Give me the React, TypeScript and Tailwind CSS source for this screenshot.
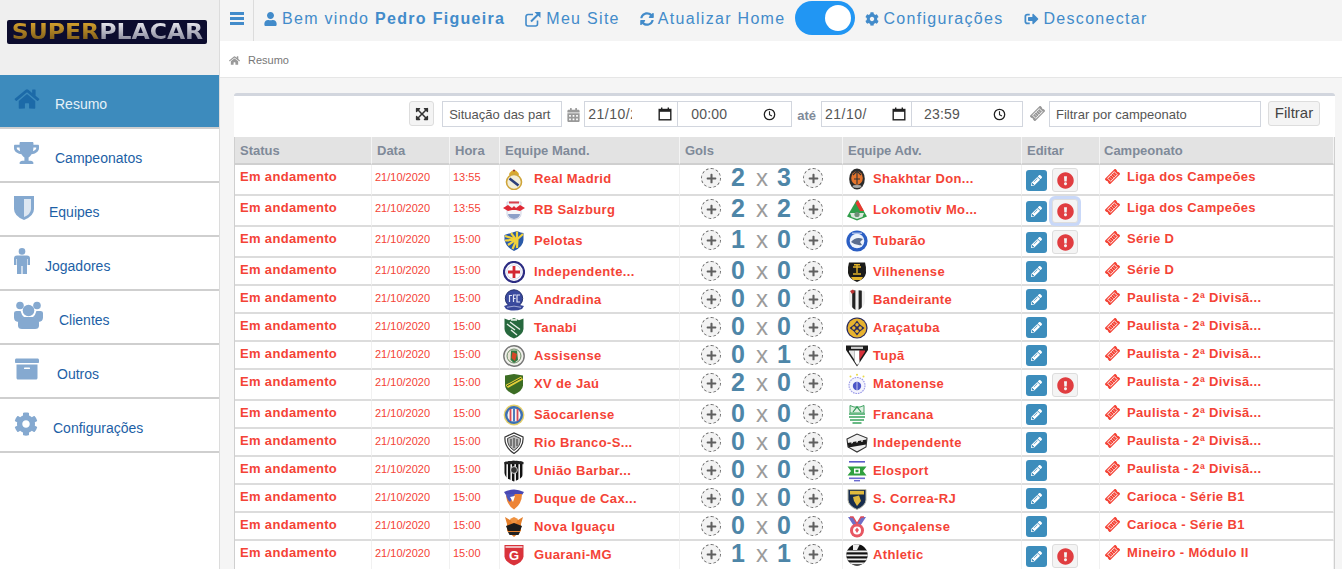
import React from "react";
import {
  FaHome, FaTrophy, FaArchive, FaCog, FaSyncAlt, FaUser, FaSignOutAlt,
  FaPencilAlt, FaExclamationCircle, FaPlus, FaCalendarAlt, FaExpandArrowsAlt,
} from "react-icons/fa";

const SH = "M3 2.5Q11 0 19 2.5V12Q19 18 11 21.5Q3 18 3 12Z";

function Stripes({ id, a, b, n = 7 }: { id: string; a: string; b: string; n?: number }) {
  const w = 16 / n;
  return (
    <>
      <clipPath id={id}><path d={SH} /></clipPath>
      <g clipPath={`url(#${id})`}>
        <rect x="3" y="0" width="16" height="22" fill={a} />
        {Array.from({ length: Math.floor(n / 2) + 1 }).map((_, i) => (
          <rect key={i} x={3 + w * (2 * i + 1)} y="0" width={w} height="22" fill={b} />
        ))}
      </g>
    </>
  );
}

const crests: Record<string, React.ReactNode> = {
  realmadrid: (<>
    <path d="M6 6Q11 -2 16 6L15.5 7.5H6.5Z" fill="#d9a92f" />
    <circle cx="11" cy="14" r="7.5" fill="#f3eed8" stroke="#cfa53a" strokeWidth="1.6" />
    <path d="M6.5 10.5L15.5 17.5" stroke="#2c3f7a" strokeWidth="2.6" />
    <circle cx="11" cy="2.5" r="1" fill="#9a2f30" />
  </>),
  salzburg: (<>
    <path d="M4 3H18V15Q18 20 11 20.5Q4 20 4 15Z" fill="#f6f6f8" stroke="#c8cbe0" strokeWidth=".8" />
    <path d="M0 9L5 6L9 9L11 7L13 9L17 6L22 9L17 12L13 11H9L5 12Z" fill="#df2935" />
    <path d="M5 15H17Q17 19 11 20Q5 19 5 15Z" fill="#8da0c8" />
    <rect x="6" y="2.5" width="10" height="2" fill="#d8404c" />
  </>),
  pelotas: (<>
    <path d="M1.5 5Q8 3 14 1Q18 3 20.5 3V10Q20 17 11 21Q3 17 1.5 10Z" fill="#2a5aa8" />
    <path d="M2 6L13 9.5L5 15M14 1.6L14 9L9.5 19M20 4L14.5 9L14 18M8 3L13 9.5L2 10.5" stroke="#f1d23c" strokeWidth="2.2" fill="none" />
  </>),
  independente: (<>
    <circle cx="11" cy="11" r="10" fill="#fff" stroke="#2c2c83" strokeWidth="2.2" />
    <circle cx="11" cy="11" r="7.2" fill="none" stroke="#c9c9e6" strokeWidth=".8" />
    <path d="M9.6 5H12.4V9.6H17V12.4H12.4V17H9.6V12.4H5V9.6H9.6Z" fill="#d32833" />
  </>),
  andradina: (<>
    <circle cx="11" cy="9.5" r="8.7" fill="#3a4a9e" stroke="#28336f" strokeWidth="1" />
    <path d="M6.5 13V6.5H9M13 6H10.5V13M10.5 9.5H12.6M17 6H14V13H17" stroke="#dfe3f5" strokeWidth="1.2" fill="none" />
    <path d="M1 17Q11 13.5 21 17L19 20Q11 23 3 20Z" fill="#39479a" />
    <path d="M4 18.3Q11 16 18 18.3" stroke="#cfd4ef" strokeWidth=".7" fill="none" />
  </>),
  tanabi: (<>
    <path d="M1.5 1.5L6 3.2L11 1L16 3.2L20.5 1.5V12Q20 18 11 21.5Q2 18 1.5 12Z" fill="#27693e" />
    <path d="M4 7L12 13M7 5L17 12.5M8 13L14 18" stroke="#e6efe8" strokeWidth="1.4" />
    <rect x="8" y="2" width="6" height="1.8" fill="#d7e6da" />
  </>),
  assisense: (<>
    <circle cx="11" cy="11" r="10.2" fill="#f1f1ec" stroke="#777" strokeWidth="1.4" />
    <circle cx="11" cy="11" r="7" fill="#e9e6d7" stroke="#6c8a68" strokeWidth="1" />
    <path d="M8 5.5H14L15 15L11 18L7.5 15Z" fill="#317a43" />
    <path d="M9.5 7L14 9L12 16L8.5 13Z" fill="#d74626" />
  </>),
  xvjau: (<>
    <path d="M2 2.5L11 1L20 2.5V12.5Q19.5 18 11 21.5Q2.5 18 2 12.5Z" fill="#3c6d24" />
    <path d="M2.5 12L18 3.5L20 6.5L5 15Z" fill="#e4cf38" />
    <path d="M4 12.8L18.4 5" stroke="#2f5420" strokeWidth="1" />
  </>),
  saocarlense: (<>
    <circle cx="11" cy="11" r="10.4" fill="#e4cf6a" />
    <circle cx="11" cy="11" r="9" fill="#3b6fb5" />
    <circle cx="11" cy="11" r="6.6" fill="#f4f4f4" />
    <rect x="6.6" y="5" width="1.8" height="12" fill="#d84a55" />
    <rect x="10.1" y="4.4" width="1.8" height="13" fill="#3b6fb5" />
    <rect x="13.6" y="5" width="1.8" height="12" fill="#d84a55" />
  </>),
  riobranco: (<>
    <path d="M2 5L11 1L20 5Q21 15 11 21.5Q1 15 2 5Z" fill="#fff" stroke="#333" strokeWidth="1.2" />
    <path d="M4.5 6.5L11 3.5L17.5 6.5Q18 14 11 18.5Q4 14 4.5 6.5Z" fill="#bbb" stroke="#333" strokeWidth=".9" />
    <path d="M8 7V14M11 6V16M14 7V14" stroke="#333" strokeWidth="1" />
  </>),
  uniao: (<>
    <clipPath id="c-uniao"><path d="M1.5 2Q11 -.5 20.5 2V13Q20 18.5 11 21.5Q2 18.5 1.5 13Z" /></clipPath>
    <g clipPath="url(#c-uniao)">
      <rect width="22" height="22" fill="#eee" />
      {[1, 5, 9, 13, 17].map((x) => <rect key={x} x={x} width="2.4" height="22" fill="#111" />)}
      <rect y="0" width="22" height="4.2" fill="#222" />
      <circle cx="11" cy="10" r="3.4" fill="#333" stroke="#eee" strokeWidth=".8" />
    </g>
  </>),
  duque: (<>
    <path d="M1 4Q11 -1 21 4L19 7H3Z" fill="#4848b4" />
    <path d="M3 6H19Q19 16 11 21.5Q3 16 3 6Z" fill="#ed8436" />
    <path d="M3 6H12L7 14Q3.5 11 3 6Z" fill="#4a55bd" />
    <path d="M7 9L12 8L10 14Z" fill="#fff" />
  </>),
  novaiguacu: (<>
    <path d="M2 1L7 4H15L20 1L18 8V15L11 21L4 15V8Z" fill="#e47f2b" />
    <path d="M3 10L11 7L19 10L17 15H5Z" fill="#1c1c1c" />
    <path d="M5 16H17L15.5 19H6.5Z" fill="#222" />
    <path d="M7 3L11 1L15 3L13 7H9Z" fill="#ef9240" />
  </>),
  guarani: (<>
    <path d="M1.5 1H20.5V12.5Q20 18 11 21.5Q2 18 1.5 12.5Z" fill="#d9333b" />
    <rect x="2.5" y="2" width="17" height="2" fill="#eeb7ba" />
    <text x="11" y="16" textAnchor="middle" fontFamily="Liberation Sans" fontWeight="700" fontSize="13" fill="#fff">G</text>
  </>),
  shakhtar: (<>
    <ellipse cx="11" cy="11" rx="7.8" ry="10.6" fill="#2b2b2b" />
    <ellipse cx="11" cy="10" rx="5.8" ry="6.8" fill="#e5742c" />
    <path d="M7 7L11 3L15 7M8 11H14M11 4V16" stroke="#333" strokeWidth="1.1" fill="none" />
    <ellipse cx="11" cy="18.5" rx="4.4" ry="1.4" fill="#aaa" />
  </>),
  lokomotiv: (<>
    <path d="M11 .5L21 17.5L11 21.5L1 17.5Z" fill="#2f9e4a" />
    <path d="M12 1L18 12H14L9.5 4Z" fill="#e63a2f" />
    <path d="M4 14H18L16.5 18L11 20L5.5 18Z" fill="#d8e8dc" />
    <circle cx="11" cy="15.5" r="2.6" fill="#6f8f78" />
  </>),
  tubarao: (<>
    <circle cx="11" cy="11" r="10.6" fill="#2c5fc4" />
    <circle cx="11" cy="11" r="7.3" fill="#eef3fb" />
    <path d="M5 12Q10 6 17 9L14 12L16 15Q10 16 5 12Z" fill="#5b6d8f" />
    <path d="M6 3.2H16" stroke="#dfe7f8" strokeWidth="1" />
  </>),
  vilhenense: (<>
    <path d="M3 1.5H19Q20.5 6 20 12Q19 18 11 21Q3 18 2 12Q1.5 6 3 1.5Z" fill="#1c1c1a" />
    <path d="M7 6H15M8 3.8H14M11 4V12M7 13H15" stroke="#e2b32a" strokeWidth="1.4" />
    <path d="M5 16H17L15 19H7Z" fill="#e2b32a" />
  </>),
  bandeirante: (<>
    <Stripes id="c-band" a="#efefef" b="#222" n={5} />
    <path d="M4 2L7 .6L9 3L6 5Z" fill="#b33" />
  </>),
  aracatuba: (<>
    <circle cx="11" cy="11" r="10.6" fill="#27295f" />
    <circle cx="11" cy="11" r="9.4" fill="#e8b32f" />
    <path d="M11 3.5L14 7.5L18.5 11L14 14.5L11 18.5L8 14.5L3.5 11L8 7.5Z" fill="#27295f" />
    <circle cx="11" cy="7.8" r="1.7" fill="#e8b32f" />
    <circle cx="11" cy="14.2" r="1.7" fill="#e8b32f" />
    <circle cx="7.8" cy="11" r="1.7" fill="#e8b32f" />
    <circle cx="14.2" cy="11" r="1.7" fill="#e8b32f" />
  </>),
  tupa: (<>
    <path d="M0 .5H22V5L11 21.5L0 5Z" fill="#1a1a1a" />
    <path d="M3 5.5H8.5V15L3 6.8Z" fill="#e6e6e6" />
    <path d="M8.5 5.5H13.5V18L11 20L8.5 16Z" fill="#fff" />
    <path d="M13.5 5.5H19V6.8L13.5 15Z" fill="#d7303a" />
    <rect x="5" y="1.7" width="12" height="2.2" fill="#cfcfcf" />
  </>),
  matonense: (<>
    <circle cx="11" cy="12.5" r="8" fill="#f4f4fd" stroke="#9a9ae8" strokeWidth="1.1" strokeDasharray="1.6 .9" />
    <circle cx="11" cy="13" r="4.2" fill="#4c55c7" />
    <path d="M11 9V17" stroke="#dfe1fa" strokeWidth=".8" />
    <circle cx="11" cy="1.8" r="1" fill="#e9d94a" />
    <circle cx="4.5" cy="3.5" r="1" fill="#e9d94a" />
    <circle cx="17.5" cy="3.5" r="1" fill="#e9d94a" />
  </>),
  francana: (<>
    <path d="M4 1.5L8 3H14L18 1.5V9H4Z" fill="#dff0e2" stroke="#2f9a55" strokeWidth=".9" />
    <path d="M7 8L11 2.8L15 8" stroke="#2f9a55" strokeWidth="1.2" fill="none" />
    <path d="M3 9H19V13Q18 19 11 21.5Q4 19 3 13Z" fill="#fff" />
    <path d="M3 10H19M3 13H19M4 16H18M6.5 19H15.5" stroke="#39a45e" strokeWidth="1.6" />
  </>),
  independente2: (<>
    <path d="M1 7L11 2L21 6L20 15L11 20L2 15Z" fill="#efefef" stroke="#333" strokeWidth="1.1" />
    <path d="M1.5 11L20.5 7.5L20 12.5L2.5 15.5Z" fill="#1a1a1a" />
    <path d="M5 11L7 10.5M10 10L12 9.7M15 9.2L17 8.9" stroke="#eee" strokeWidth="1.2" />
  </>),
  elosport: (<>
    <rect x="3" y="1" width="16" height="1.6" fill="#5a5ac8" />
    <path d="M1.5 6.5H20.5L17 11L20.5 15.5H1.5L5 11Z" fill="#2fa03f" />
    <rect x="8" y="8.5" width="6" height="5" fill="#fff" />
    <rect x="9.5" y="9.8" width="3" height="2.4" fill="#2fa03f" />
    <rect x="3" y="17.5" width="16" height="1.6" fill="#6a6ad0" />
    <rect x="8" y="20" width="6" height="1.4" fill="#6a6ad0" />
  </>),
  scorrea: (<>
    <path d="M2 1.5H20V12Q19.5 18 11 21.5Q2.5 18 2 12Z" fill="#172c4d" stroke="#b8b8a8" strokeWidth="1" />
    <path d="M4 2.8H18V6.5H4Z" fill="#e1b93d" />
    <path d="M7 9L13 7.5L15 13L11 18L8 13Z" fill="#e1b93d" />
  </>),
  goncalense: (<>
    <path d="M2 1L7 1L11 8L15 1L20 1L13.5 11H8.5Z" fill="#6e6ec6" />
    <path d="M4 1L7 1L11 7.5L15 1L18 1" stroke="#e04a55" strokeWidth="1.3" fill="none" />
    <circle cx="11" cy="14.5" r="7" fill="#e75762" />
    <circle cx="11" cy="14.5" r="4" fill="#fff" />
    <path d="M11 11.5L13 14L11 17L9 14Z" fill="#e75762" />
  </>),
  athletic: (<>
    <clipPath id="c-ath"><circle cx="11" cy="11" r="10.7" /></clipPath>
    <g clipPath="url(#c-ath)">
      <rect width="22" height="22" fill="#111" />
      {[6.5, 10.5, 14.5, 18.5].map((y) => <rect key={y} y={y} width="22" height="1.8" fill="#eee" />)}
      <path d="M7 0H14L11 6H7Z" fill="#eee" />
    </g>
  </>),
};

function Crest({ name }: { name: string }) {
  return <svg viewBox="0 0 22 22" width="22" height="22" className="shrink-0">{crests[name]}</svg>;
}

type Row = {
  t: string; a: string; ac: string; sa: number; sb: number; b: string; bc: string; c: string; alert?: boolean; focus?: boolean;
};
const PA = "Paulista - 2ª Divisã...";
const rows: Row[] = [
  { t: "13:55", a: "Real Madrid", ac: "realmadrid", sa: 2, sb: 3, b: "Shakhtar Don...", bc: "shakhtar", c: "Liga dos Campeões", alert: true },
  { t: "13:55", a: "RB Salzburg", ac: "salzburg", sa: 2, sb: 2, b: "Lokomotiv Mo...", bc: "lokomotiv", c: "Liga dos Campeões", alert: true, focus: true },
  { t: "15:00", a: "Pelotas", ac: "pelotas", sa: 1, sb: 0, b: "Tubarão", bc: "tubarao", c: "Série D", alert: true },
  { t: "15:00", a: "Independente...", ac: "independente", sa: 0, sb: 0, b: "Vilhenense", bc: "vilhenense", c: "Série D" },
  { t: "15:00", a: "Andradina", ac: "andradina", sa: 0, sb: 0, b: "Bandeirante", bc: "bandeirante", c: PA },
  { t: "15:00", a: "Tanabi", ac: "tanabi", sa: 0, sb: 0, b: "Araçatuba", bc: "aracatuba", c: PA },
  { t: "15:00", a: "Assisense", ac: "assisense", sa: 0, sb: 1, b: "Tupã", bc: "tupa", c: PA },
  { t: "15:00", a: "XV de Jaú", ac: "xvjau", sa: 2, sb: 0, b: "Matonense", bc: "matonense", c: PA, alert: true },
  { t: "15:00", a: "Sãocarlense", ac: "saocarlense", sa: 0, sb: 0, b: "Francana", bc: "francana", c: PA },
  { t: "15:00", a: "Rio Branco-S...", ac: "riobranco", sa: 0, sb: 0, b: "Independente", bc: "independente2", c: PA },
  { t: "15:00", a: "União Barbar...", ac: "uniao", sa: 0, sb: 0, b: "Elosport", bc: "elosport", c: PA },
  { t: "15:00", a: "Duque de Cax...", ac: "duque", sa: 0, sb: 0, b: "S. Correa-RJ", bc: "scorrea", c: "Carioca - Série B1" },
  { t: "15:00", a: "Nova Iguaçu", ac: "novaiguacu", sa: 0, sb: 0, b: "Gonçalense", bc: "goncalense", c: "Carioca - Série B1" },
  { t: "15:00", a: "Guarani-MG", ac: "guarani", sa: 1, sb: 1, b: "Athletic", bc: "athletic", c: "Mineiro - Módulo II", alert: true },
];

function PlusBtn() {
  return (
    <div className="w-5 h-5 mt-[3px] shrink-0 rounded-full border border-dashed border-[#666] bg-[#f3f3f3] flex items-center justify-center">
      <FaPlus className="text-[#5f5f5f] w-[11px] h-[11px]" />
    </div>
  );
}

function Ticket({ color }: { color: string }) {
  return (
    <svg viewBox="0 0 16 16" width="15" height="15" className="shrink-0">
      <g transform="rotate(-45 8 8)" fill={color}>
        <path d="M0 4H16V6.4Q14.6 8 16 9.6V12H0V9.6Q1.4 8 0 6.4Z" />
        <rect x="3" y="5.6" width="10" height="4.8" fill="none" stroke="#fff" strokeWidth=".9" />
        <path d="M5.5 5.6V10.4M8 5.6V10.4M10.5 5.6V10.4" stroke="#fff" strokeWidth=".5" />
      </g>
    </svg>
  );
}

const thC = "h-[28px] text-left pl-[5px] last:pl-[4px] pt-[1px] text-[13px] font-bold text-[#7f8a99] bg-[#e3e3e3] border-b-2 border-b-[#cfcfcf] border-r border-r-[#f4f4f4] align-middle";
const tdC = "align-top border-b-2 border-b-[#dcdcdc] border-r border-r-[#f1f1f1] p-0";
const red = "text-[#f44336]";

function TableRow({ r }: { r: Row }) {
  const h = r.alert ? "h-[31px]" : "h-[28px]";
  return (
    <tr className={h}>
      <td className={tdC}><div className={`pl-[5px] pt-[3px] leading-[18px] text-[13px] font-bold tracking-[0.33px] ${red}`}>Em andamento</div></td>
      <td className={tdC}><div className={`pl-[3px] pt-[4px] leading-[16px] text-[11px] ${red}`}>21/10/2020</div></td>
      <td className={tdC}><div className={`pl-[3px] pt-[4px] leading-[16px] text-[11px] ${red}`}>{r.t}</div></td>
      <td className={tdC}>
        <div className="flex items-start pl-[3px] pt-[3px]">
          <Crest name={r.ac} />
          <span className={`ml-[9px] mt-[2px] leading-[18px] text-[13px] font-bold tracking-[0.36px] whitespace-nowrap ${red}`}>{r.a}</span>
        </div>
      </td>
      <td className={tdC}>
        <div className="flex items-start pl-[21px] h-[26px]">
          <PlusBtn />
          <div className="flex items-baseline ml-[10px] h-[25px] -mt-[1px]">
            <span className="w-[14px] text-[25px] leading-[26px] font-bold text-[#4e86a8]">{r.sa}</span>
            <span className="w-[12px] ml-[11px] text-[24px] leading-[24px] text-[#9b9b9b]">x</span>
            <span className="w-[14px] ml-[9px] text-[25px] leading-[26px] font-bold text-[#4e86a8]">{r.sb}</span>
          </div>
          <div className="ml-[12px]"><PlusBtn /></div>
        </div>
      </td>
      <td className={tdC}>
        <div className="flex items-start pl-[3px] pt-[3px]">
          <Crest name={r.bc} />
          <span className={`ml-[5px] mt-[2px] leading-[18px] text-[13px] font-bold tracking-[0.36px] whitespace-nowrap ${red}`}>{r.b}</span>
        </div>
      </td>
      <td className={tdC}>
        <div className="flex items-start pl-[4px]">
          <div className={`w-[21px] h-[21px] rounded-[3px] bg-[#3c8dbc] flex items-center justify-center ${r.alert ? "mt-[5px]" : "mt-[3px]"}`}>
            <FaPencilAlt className="text-white w-[11px] h-[11px]" />
          </div>
          {r.alert && (
            <div className={`w-[26px] h-[24px] ml-[5px] mt-[3px] rounded-[3px] bg-[#f4f4f4] border border-[#ddd] flex items-center justify-center ${r.focus ? "ring-[3px] ring-[#c9d8f8]" : ""}`}>
              <FaExclamationCircle className="text-[#e03d40] w-[17px] h-[17px]" />
            </div>
          )}
        </div>
      </td>
      <td className={tdC}>
        <div className="flex items-start pl-[5px] pt-[3px]">
          <span className="mt-[1px]"><Ticket color="#f44336" /></span>
          <span className={`ml-[7px] leading-[18px] text-[13px] font-bold tracking-[0.36px] whitespace-nowrap ${red}`}>{r.c}</span>
        </div>
      </td>
    </tr>
  );
}

const ShieldIcon = () => (
  <svg viewBox="0 0 20 24" width="20" height="24">
    <path d="M0 0H20V13Q20 20 10 24Q0 20 0 13Z" fill="#85a9d0" />
    <path d="M10 3H17V13Q17 18 10 21Z" fill="#fff" opacity=".72" />
  </svg>
);
const ManIcon = () => (
  <svg viewBox="0 0 16 26" width="16" height="26" fill="#85a9d0">
    <circle cx="8" cy="3.4" r="3.3" />
    <path d="M3 7.5H13Q16 7.5 16 10.5V17H13.6V11H13V26H8.6V18H7.4V26H3V11H2.4V17H0V10.5Q0 7.5 3 7.5Z" />
  </svg>
);
const GroupIcon = () => (
  <svg viewBox="0 0 29 28" width="29" height="28" fill="#85a9d0">
    <circle cx="6" cy="4.5" r="3.8" />
    <circle cx="23" cy="4.5" r="3.8" />
    <circle cx="14.5" cy="9.5" r="5.8" />
    <path d="M2.5 10H6.6Q7.5 14 10 16Q5.5 17 4.5 21Q0 20.5 0 16.5V12Q0 10 2.5 10Z" />
    <path d="M26.5 10H22.4Q21.5 14 19 16Q23.5 17 24.5 21Q29 20.5 29 16.5V12Q29 10 26.5 10Z" />
    <path d="M9 16H20Q25 16.5 25 21.5V24.5Q25 28 21 28H8Q4 28 4 24.5V21.5Q4 16.5 9 16Z" />
  </svg>
);

const side = [
  { n: "Resumo", i: <FaHome className="w-[26px] h-[22px]" />, top: "pt-[13px]", tx: "pl-[55px]", active: true },
  { n: "Campeonatos", i: <FaTrophy className="w-[25px] h-[24px]" />, top: "pt-[12px]", tx: "pl-[55px]" },
  { n: "Equipes", i: <ShieldIcon />, top: "pt-[13px]", tx: "pl-[49px]" },
  { n: "Jogadores", i: <ManIcon />, top: "pt-[11px]", tx: "pl-[45px]" },
  { n: "Clientes", i: <GroupIcon />, top: "pt-[10px]", tx: "pl-[59px]" },
  { n: "Outros", i: <FaArchive className="w-[26px] h-[24px]" />, top: "pt-[12px]", tx: "pl-[57px]" },
  { n: "Configurações", i: <FaCog className="w-[24px] h-[24px]" />, top: "pt-[13px]", tx: "pl-[53px]" },
];

const ExtLink = () => (
  <svg viewBox="0 0 16 16" width="16" height="16" fill="none" stroke="#428bca">
    <path d="M12.5 9.5V13a2 2 0 0 1-2 2H3a2 2 0 0 1-2-2V5.5a2 2 0 0 1 2-2h5" strokeWidth="1.6" />
    <path d="M6 10.5L14 2.5" strokeWidth="2" />
    <path d="M9.5 1H15.5V7Z" fill="#428bca" stroke="none" />
  </svg>
);

function Nav({ icon, children, cls, gap }: { icon: React.ReactNode; children: React.ReactNode; cls: string; gap: string }) {
  return (
    <div className={`flex items-center h-[18px] ${cls}`}>
      {icon}
      <span className={`${gap} whitespace-nowrap`}>{children}</span>
    </div>
  );
}

const CalIcon = () => (
  <svg viewBox="0 0 14 14" width="14" height="14" fill="none" stroke="#222" className="shrink-0">
    <rect x="1.2" y="2.5" width="11.6" height="10.3" strokeWidth="1.4" />
    <rect x="1" y="2" width="12" height="2.8" fill="#222" stroke="none" />
    <path d="M3.7 .6V3M10.3 .6V3" strokeWidth="1.4" />
  </svg>
);
const ClockIcon = () => (
  <svg viewBox="0 0 14 14" width="13" height="13" fill="none" stroke="#222" className="shrink-0">
    <circle cx="7" cy="7" r="5.6" strokeWidth="1.4" />
    <path d="M7 3.6V7.2L9.6 8.6" strokeWidth="1.2" />
  </svg>
);

function DateTime({ date, time, w1, w2, dw, iconMl, timeMl, clockMl }: { date: string; time: string; w1: string; w2: string; dw: string; iconMl: string; timeMl: string; clockMl: string }) {
  return (
    <div className="flex h-[26px] border border-[#d2d6de] bg-white text-[14px] text-[#555]">
      <div className={`flex items-center pl-[3px] border-r border-[#d2d6de] ${w1}`}>
        <span className={`overflow-hidden whitespace-nowrap tracking-[0.5px] ${dw}`}>{date}</span>
        <span className={iconMl}><CalIcon /></span>
      </div>
      <div className={`flex items-center ${w2}`}>
        <span className={`w-[60px] tracking-[0.2px] ${timeMl}`}>{time}</span>
        <span className={clockMl}><ClockIcon /></span>
      </div>
    </div>
  );
}

export default function App() {
  return (
    <div className="flex w-full h-[569px] overflow-hidden font-['Liberation_Sans',Arial,sans-serif] bg-[#f5f5f5]">
      <aside className="w-[219px] shrink-0 bg-white">
        <div className="h-[75px] bg-[#efefef] pt-[20px] pl-[7px]">
          <div className="w-[200px] h-[24px] rounded-[2px] bg-[#0c0c2e] flex items-center justify-center overflow-hidden">
            <span className="font-['DejaVu_Sans',sans-serif] text-[21px] leading-[24px] font-bold scale-x-[1.12] whitespace-nowrap">
              <span className="bg-linear-to-b from-[#e0aa30] to-[#6e5016] bg-clip-text text-transparent">SUPER</span>
              <span className="bg-linear-to-b from-[#f4f4f8] to-[#77778c] bg-clip-text text-transparent">PLACAR</span>
            </span>
          </div>
        </div>
        {side.map((s) => (
          <div key={s.n} className={`relative h-[54px] flex items-start border-b-2 border-[#cfcfcf] pl-[14px] ${s.top} ${s.active ? "bg-[#3d8bbd] text-[#1c6aa8]" : "bg-white text-[#85a9d0]"}`}>
            <span className="shrink-0 flex">{s.i}</span>
            <span className={`absolute left-0 top-[19px] ${s.tx} text-[14px] leading-[20px] whitespace-nowrap ${s.active ? "text-[#e6f1f8]" : "text-[#1d5fa6]"}`}>{s.n}</span>
          </div>
        ))}
      </aside>

      <main className="flex-1 min-w-0 flex flex-col border-l border-[#dcdcdc]">
        <header className="h-[41px] shrink-0 bg-[#f4f4f4] flex text-[16px] tracking-[1.3px] text-[#428bca]">
          <div className="w-[34px] h-[41px] border-r border-[#dcdcdc] flex justify-center pt-[12px] shrink-0">
            <div className="w-[14px] h-[13px] flex flex-col justify-between">
              <div className="h-[3px] bg-[#428bca]" /><div className="h-[3px] bg-[#428bca]" /><div className="h-[3px] bg-[#428bca]" />
            </div>
          </div>
          <div className="flex items-start pt-[10px] leading-[18px]">
            <Nav cls="ml-[10px]" gap="ml-[5px]" icon={<FaUser className="w-[13px] h-[14px]" />}>Bem vindo <b>Pedro Figueira</b></Nav>
            <Nav cls="ml-[20px]" gap="ml-[5px]" icon={<ExtLink />}>Meu Site</Nav>
            <Nav cls="ml-[20px]" gap="ml-[4px]" icon={<FaSyncAlt className="w-[14px] h-[14px]" />}>Atualizar Home</Nav>
            <div className="ml-[10px] -mt-[9px] w-[60px] h-[34px] rounded-full bg-[#2196f3] flex items-center justify-end pr-[4px] shrink-0">
              <div className="w-[26px] h-[26px] rounded-full bg-white" />
            </div>
            <Nav cls="ml-[10px]" gap="ml-[4px]" icon={<FaCog className="w-[14px] h-[14px]" />}>Configurações</Nav>
            <Nav cls="ml-[21px]" gap="ml-[4px]" icon={<FaSignOutAlt className="w-[15px] h-[14px]" />}>Desconectar</Nav>
          </div>
        </header>

        <div className="h-[37px] shrink-0 bg-white border-b border-[#e6e6e6] flex items-center pl-[9px] pt-[2px] text-[11px] text-[#777]">
          <FaHome className="w-[11px] h-[11px] text-[#999]" />
          <span className="ml-[8px]">Resumo</span>
        </div>

        <div className="flex-1 pl-[14px] pr-[7px] pt-[15px] min-h-0">
          <div className="border-t-[3px] border-[#d2d6de] rounded-t-[3px] bg-white">
            <div className="h-[41px] pt-[5px] flex items-start justify-end pr-[15px]">
              <div className="w-[25px] h-[25px] rounded-[3px] bg-[#f4f4f4] border border-[#ddd] flex items-center justify-center">
                <FaExpandArrowsAlt className="w-[14px] h-[14px] text-[#333]" />
              </div>
              <input readOnly value="Situação das part" className="ml-[8px] w-[120px] h-[26px] px-[6px] border border-[#d2d6de] text-[13px] text-[#555] outline-none bg-white" />
              <FaCalendarAlt className="ml-[5px] mt-[7px] w-[13px] h-[14px] text-[#999]" />
              <div className="ml-[4px]">
                <DateTime date="21/10/2" time="00:00" w1="w-[93px]" w2="w-[113px]" dw="w-[44px]" iconMl="ml-[26px]" timeMl="ml-[13px]" clockMl="ml-[12px]" />
              </div>
              <span className="ml-[5px] mt-[6px] text-[13px] font-bold text-[#7f8a99] leading-[18px]">até</span>
              <div className="ml-[5px]">
                <DateTime date="21/10/" time="23:59" w1="w-[90px]" w2="w-[110px]" dw="w-[42px]" iconMl="ml-[25px]" timeMl="ml-[12px]" clockMl="ml-[9px]" />
              </div>
              <span className="ml-[7px] mt-[5px]"><Ticket color="#999" /></span>
              <input readOnly value="Filtrar por campeonato" className="ml-[4px] w-[212px] h-[26px] px-[6px] border border-[#d2d6de] text-[13px] text-[#555] outline-none bg-white" />
              <div className="ml-[7px] w-[52px] h-[25px] rounded-[3px] bg-[#f4f4f4] border border-[#ddd] flex items-center justify-center text-[15px] text-[#444]">Filtrar</div>
            </div>
            <table className="w-full table-fixed border-separate border-spacing-0 border-x border-[#cfcfcf]">
              <colgroup>
                <col className="w-[137px]" /><col className="w-[78px]" /><col className="w-[50px]" /><col className="w-[180px]" />
                <col className="w-[163px]" /><col className="w-[179px]" /><col className="w-[78px]" /><col />
              </colgroup>
              <thead>
                <tr>
                  {["Status", "Data", "Hora", "Equipe Mand.", "Gols", "Equipe Adv.", "Editar", "Campeonato"].map((h) => (
                    <th key={h} className={thC}>{h}</th>
                  ))}
                </tr>
              </thead>
              <tbody>
                {rows.map((r) => <TableRow key={r.a} r={r} />)}
              </tbody>
            </table>
          </div>
        </div>
      </main>
    </div>
  );
}
